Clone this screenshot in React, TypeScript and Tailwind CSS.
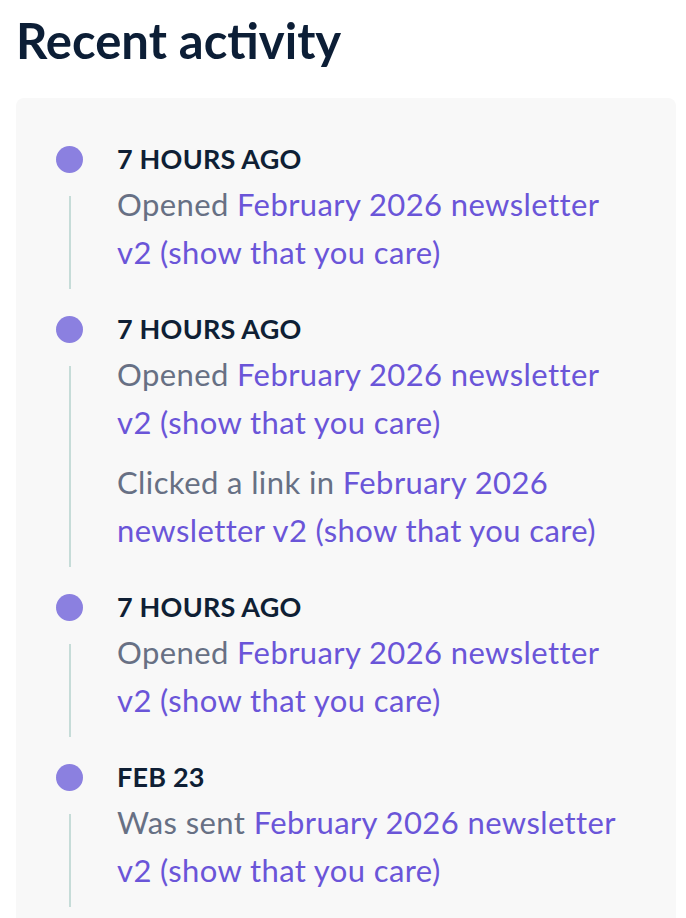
const items = [
  {
    when: "7 HOURS AGO",
    events: [{ verb: "Opened", target: "February 2026 newsletter v2 (show that you care)" }],
  },
  {
    when: "7 HOURS AGO",
    events: [
      { verb: "Opened", target: "February 2026 newsletter v2 (show that you care)" },
      { verb: "Clicked a link in", target: "February 2026 newsletter v2 (show that you care)" },
    ],
  },
  {
    when: "7 HOURS AGO",
    events: [{ verb: "Opened", target: "February 2026 newsletter v2 (show that you care)" }],
  },
  {
    when: "FEB 23",
    events: [{ verb: "Was sent", target: "February 2026 newsletter v2 (show that you care)" }],
  },
];

export default function App() {
  return (
    <div
      className="min-h-[918px] bg-white pl-4 pt-3"
      style={{ fontFamily: "Lato, 'Noto Sans', sans-serif" }}
    >
      <h1 className="text-[49px] font-bold leading-[56px] text-[#0c1e36]">Recent activity</h1>

      <div className="mt-[30px] w-[660px] rounded-t-lg bg-[#f8f8f8] pb-6 pl-10 pr-10 pt-10">
        <div className="flex flex-col gap-[19px]">
          {items.map((item, i) => (
            <div key={i} className="flex flex-col">
              {/* Time row */}
              <div className="flex items-center gap-[34px]">
                <span className="h-[27px] w-[27px] shrink-0 rounded-full bg-[#8b80e0]" />
                <p className="text-[27px] font-bold leading-[42px] tracking-[0.2px] text-[#0f1f35]">
                  {item.when}
                </p>
              </div>

              {/* Events */}
              <div className="flex gap-[34px]">
                <div className="flex w-[27px] shrink-0 justify-center pt-4">
                  <div className="h-full w-[2px] bg-[#c6dcd8]" />
                </div>
                <div className="flex max-w-[504px] flex-col gap-3 pb-[13px]">
                  {item.events.map((ev, j) => (
                    <p key={j} className="text-[31px] leading-[48px] tracking-[0.4px] text-[#677084]">
                      {ev.verb} <a className="text-[#6a55d8]">{ev.target}</a>
                    </p>
                  ))}
                </div>
              </div>
            </div>
          ))}
        </div>
      </div>
    </div>
  );
}
